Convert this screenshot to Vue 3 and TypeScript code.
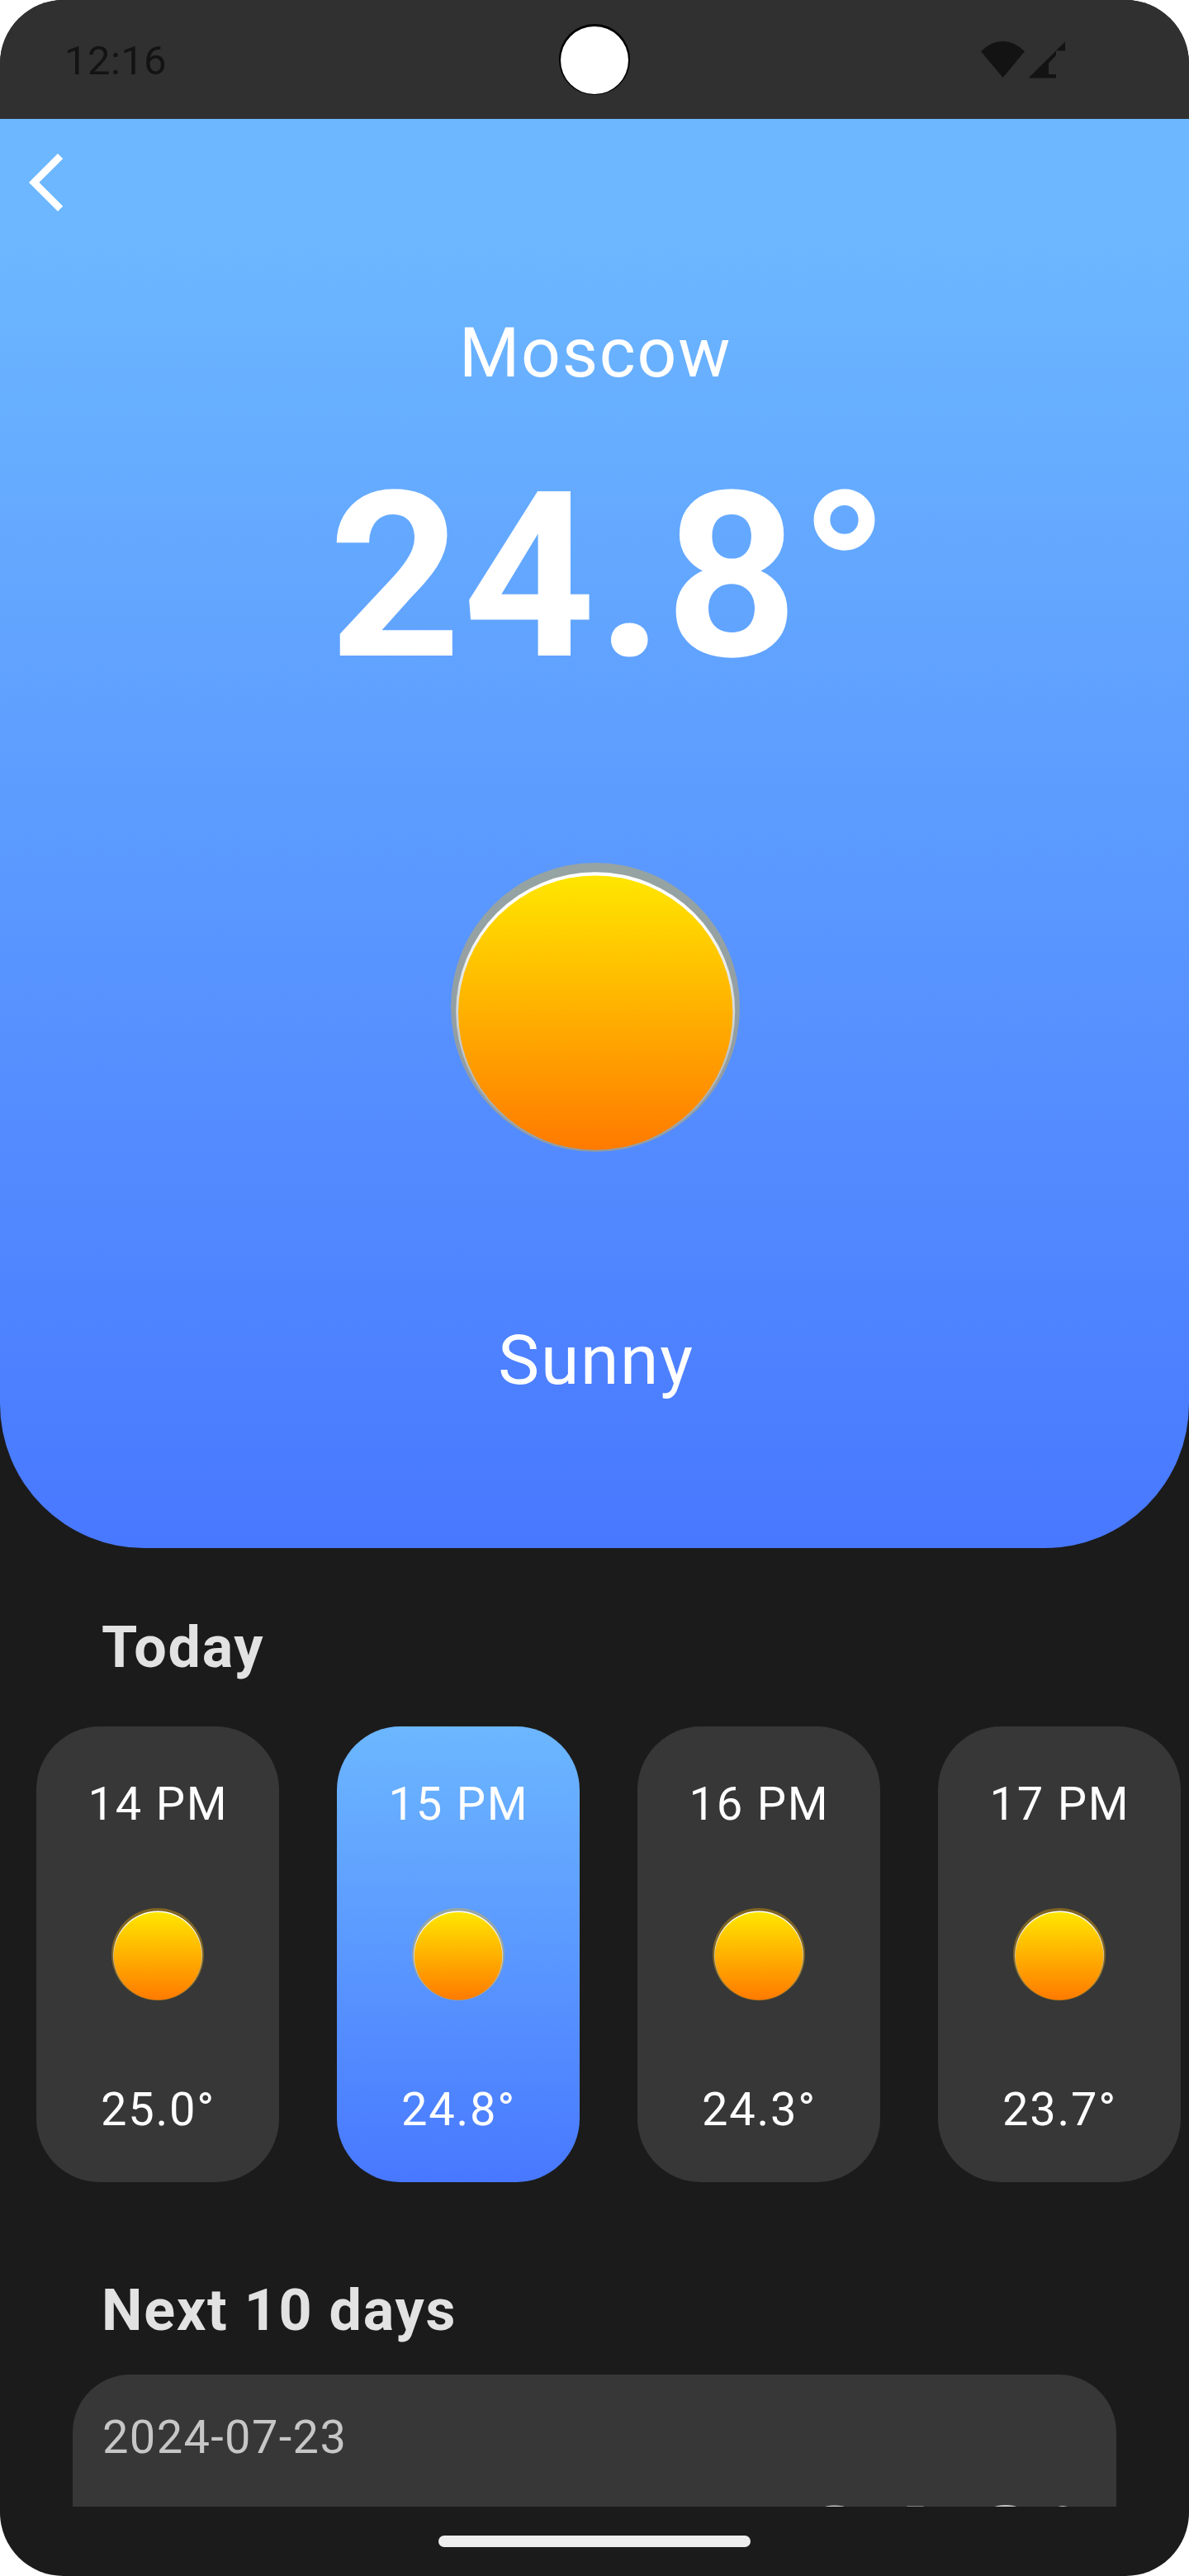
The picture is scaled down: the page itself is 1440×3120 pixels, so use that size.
<script setup lang="ts">
interface Hour {
  label: string
  temp: string
  active?: boolean
}

const city = 'Moscow'
const current = '24.8°'
const condition = 'Sunny'

const hours: Hour[] = [
  { label: '14 PM', temp: '25.0°' },
  { label: '15 PM', temp: '24.8°', active: true },
  { label: '16 PM', temp: '24.3°' },
  { label: '17 PM', temp: '23.7°' },
]

const day = { date: '2024-07-23', temp: '24.8°' }
</script>

<template>
  <div class="screen">
    <svg width="0" height="0" class="defs" aria-hidden="true">
      <defs>
        <linearGradient id="sunFill" x1="0" y1="0" x2="0" y2="1">
          <stop offset="0" stop-color="#ffe600" />
          <stop offset="1" stop-color="#ff7a00" />
        </linearGradient>
        <linearGradient id="sunRim" x1="0" y1="0" x2="0" y2="1">
          <stop offset="0" stop-color="#fff" />
          <stop offset="0.15" stop-color="#fff" />
          <stop offset="1" stop-color="#fff" stop-opacity="0" />
        </linearGradient>
        <symbol id="sun" viewBox="0 0 350 350">
          <circle cx="175" cy="175" r="175" fill="#ffb800" fill-opacity="0.36" />
          <circle cx="175.2" cy="180.3" r="169" fill="url(#sunRim)" />
          <circle cx="175.2" cy="181.6" r="166.2" fill="url(#sunFill)" />
        </symbol>
      </defs>
    </svg>

    <header class="status">
      <span class="time">12:16</span>
      <span class="camera"><span class="lens"></span></span>
      <svg class="signals" width="104" height="46" viewBox="0 0 104 46">
        <path d="M1 13.3 Q13 1 27.6 1 Q42 1 54 13.3 L27.6 45 Z" />
        <path d="M58.5 45.6 L103 1.5 V12.5 H92 V18 L83 27.5 V41 H92 V45.6 Z" />
      </svg>
    </header>

    <main class="content">
      <section class="hero">
        <svg class="back" width="84" height="84" viewBox="0 0 24 24">
          <path d="M17.77 3.77 16 2 6 12l10 10 1.77-1.77L9.54 12z" />
        </svg>
        <div class="city">{{ city }}</div>
        <div class="current">{{ current }}</div>
        <svg class="sun-big" width="350" height="350"><use href="#sun" /></svg>
        <div class="condition">{{ condition }}</div>
      </section>

      <h2 class="title today">Today</h2>
      <div class="hours">
        <div v-for="h in hours" :key="h.label" class="hour" :class="{ active: h.active }">
          <span class="hour-text">{{ h.label }}</span>
          <svg class="sun-small" width="112" height="112"><use href="#sun" /></svg>
          <span class="hour-text">{{ h.temp }}</span>
        </div>
      </div>

      <h2 class="title next">Next 10 days</h2>
      <div class="day">
        <div class="date">{{ day.date }}</div>
        <div class="day-temp">{{ day.temp }}</div>
      </div>
    </main>

    <footer class="nav"><span class="pill"></span></footer>
  </div>
</template>

<style>
body {
  background: #fff;
}
</style>

<style scoped>
.screen {
  width: 1440px;
  height: 3120px;
  overflow: hidden;
  border-radius: 77px;
  background: #1b1b1b;
  display: flex;
  flex-direction: column;
  font-family: Roboto, sans-serif;
  letter-spacing: 1.75px;
  color: #fff;
  position: relative;
}
.defs {
  position: absolute;
}
.status {
  height: 144px;
  flex: none;
  box-sizing: border-box;
  padding: 0 149px 0 78px;
  background: #303030;
  display: grid;
  grid-template-columns: 599px 86px 1fr;
  align-items: center;
}
.time {
  font-size: 49px;
  line-height: 58px;
  letter-spacing: 0.4px;
  color: #131313;
  padding-top: 4px;
}
.camera {
  width: 86px;
  height: 86px;
  border-radius: 50%;
  background: #000;
  display: flex;
  justify-content: center;
}
.lens {
  width: 82px;
  height: 82px;
  margin-top: 3px;
  border-radius: 50%;
  background: #fff;
}
.signals {
  justify-self: end;
  fill: #131313;
}
.content {
  height: 2892px;
  flex: none;
  overflow: hidden;
}
.hero {
  height: 1731px;
  border-radius: 0 0 175px 175px;
  background: linear-gradient(180deg, #6cb7ff 8%, #4878ff 100%);
  display: flex;
  flex-direction: column;
  align-items: center;
}
.back {
  align-self: flex-start;
  margin: 35px 0 0 14px;
  fill: #fff;
}
.city,
.condition {
  font-size: 84px;
  line-height: 100px;
  padding-left: 2px;
}
.city {
  margin-top: 115px;
}
.current {
  margin-top: 80px;
  padding-left: 37px;
  font-size: 280px;
  line-height: 280px;
  font-weight: 700;
}
.sun-big {
  margin: 207px 0 0 2px;
}
.condition {
  margin-top: 203px;
  padding-left: 4px;
}
.title {
  margin: 0;
  padding-left: 123px;
  font-size: 70px;
  line-height: 84px;
  font-weight: 700;
  color: #e2e2e2;
}
.today {
  margin-top: 78px;
}
.hours {
  margin-top: 54px;
  padding-left: 44px;
  display: flex;
  gap: 70px;
}
.hour {
  flex: none;
  width: 294px;
  height: 552px;
  box-sizing: border-box;
  padding: 52px 0 46px;
  border-radius: 77px;
  background: #373737;
  display: flex;
  flex-direction: column;
  align-items: center;
  justify-content: space-between;
  font-size: 56px;
  line-height: 84px;
}
.hour.active {
  background: linear-gradient(180deg, #6cb7ff 0%, #4878ff 100%);
}
.hour-text {
  padding-left: 1px;
}
.sun-small {
  margin-bottom: 6px;
}
.next {
  margin-top: 113px;
}
.day {
  margin: 36px 88px 0;
  height: 420px;
  box-sizing: border-box;
  padding: 34px 36px 0;
  border-radius: 70px;
  background: #373737;
  color: #c6c6c6;
}
.date {
  font-size: 56px;
  line-height: 84px;
  letter-spacing: 1.35px;
}
.day-temp {
  margin-top: 23px;
  font-size: 140px;
  line-height: 140px;
  font-weight: 700;
  text-align: right;
}
.nav {
  height: 84px;
  display: flex;
  justify-content: center;
  padding-top: 35px;
  box-sizing: border-box;
}
.pill {
  width: 378px;
  height: 14px;
  border-radius: 7px;
  background: #ededed;
}
</style>
